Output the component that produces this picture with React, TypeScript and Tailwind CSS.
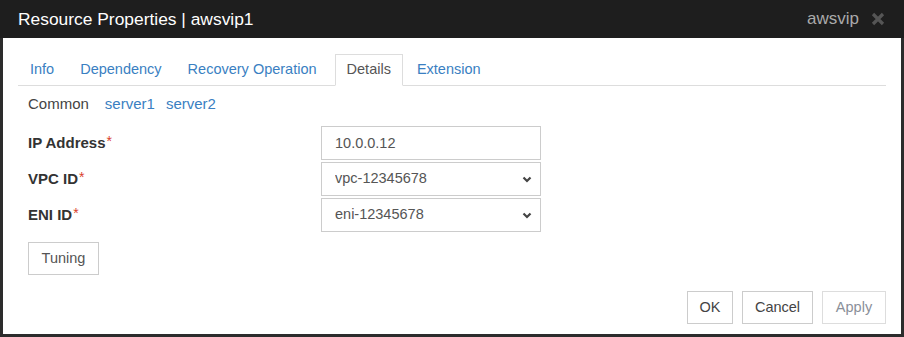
import React from 'react'

const tabs = ['Info', 'Dependency', 'Recovery Operation', 'Details', 'Extension']

function Chevron() {
  return (
    <svg width="10" height="7" viewBox="0 0 10 7" className="absolute right-[9px] top-[14px] pointer-events-none">
      <path d="M1.5 1.5 L5 5 L8.5 1.5" fill="none" stroke="#444" strokeWidth="2.2" />
    </svg>
  )
}

function Field({ label, children }) {
  return (
    <div className="flex items-center h-[34px]">
      <div className="w-[293px] text-[15px] font-bold text-[#333]">
        {label}
        <sup className="text-[#d9412c] text-[14px] font-normal relative top-[-2px] ml-[1px]">*</sup>
      </div>
      {children}
    </div>
  )
}

function SelectBox({ value }) {
  return (
    <div className="relative w-[220px] h-[34px]">
      <select
        defaultValue={value}
        className="appearance-none w-full h-full border border-[#ccc] bg-white pl-[13px] text-[#555] text-[14.5px] outline-none"
      >
        <option>{value}</option>
      </select>
      <Chevron />
    </div>
  )
}

export default function App() {
  return (
    <div className="w-[904px] h-[337px] bg-[#2c2c2c] px-[3px] pb-[3px] flex flex-col" style={{ fontFamily: '"Liberation Sans", Arial, sans-serif' }}>
      {/* title bar */}
      <div className="h-[38px] bg-[#1e1e1e] -mx-[3px] px-[18px] flex items-center justify-between">
        <div className="text-white text-[17.4px]">Resource Properties | awsvip1</div>
        <div className="flex items-center gap-[12px] pr-[1px]">
          <span className="text-[#aaa] text-[17px]">awsvip</span>
          <svg width="14" height="14" viewBox="0 0 14 14">
            <path d="M2 2 L12 12 M12 2 L2 12" stroke="#555" strokeWidth="3.2" />
          </svg>
        </div>
      </div>

      <div className="flex-1 bg-white px-[15px] flex flex-col">
        {/* tabs */}
        <div className="mt-[16px] flex h-[32px] border-b border-[#ddd]">
          {tabs.map((t) => (
            <div
              key={t}
              className={
                'pl-[11px] mr-[2px] flex items-center text-[14.5px] ' +
                (t === 'Recovery Operation' ? 'pr-[15px] ' : 'pr-[11px] ') +
                (t === 'Details'
                  ? 'border border-[#ddd] border-b-white mb-[-1px] bg-white text-[#555]'
                  : 'border border-transparent text-[#3a7fc2]')
              }
            >
              {t}
            </div>
          ))}
        </div>

        <div className="h-[36px] pl-[10px] flex items-center text-[15px]">
          <span className="text-[#444]">Common</span>
          <span className="text-[#3a7fc2] ml-[16px]">server1</span>
          <span className="text-[#3a7fc2] ml-[11px]">server2</span>
        </div>

        <div className="mt-[4px] pl-[10px] flex flex-col gap-[2px]">
          <Field label="IP Address">
            <input
              defaultValue="10.0.0.12"
              className="w-[220px] h-[34px] border border-[#ccc] pl-[13px] text-[#555] text-[14.5px] outline-none"
            />
          </Field>
          <Field label="VPC ID">
            <SelectBox value="vpc-12345678" />
          </Field>
          <Field label="ENI ID">
            <SelectBox value="eni-12345678" />
          </Field>
        </div>

        <div className="mt-[10px] pl-[10px]">
          <button className="h-[33px] w-[71px] border border-[#ccc] text-[#555] text-[14.5px] bg-white">Tuning</button>
        </div>

        <div className="mt-[16px] flex justify-end gap-[9px]">
          <button className="h-[33px] w-[46px] border border-[#ccc] text-[#444] text-[14.5px] bg-white">OK</button>
          <button className="h-[33px] w-[71px] border border-[#ccc] text-[#444] text-[14.5px] bg-white">Cancel</button>
          <button className="h-[33px] w-[64px] border border-[#ddd] text-[#8a8f99] text-[14.5px] bg-white">Apply</button>
        </div>
      </div>
    </div>
  )
}
